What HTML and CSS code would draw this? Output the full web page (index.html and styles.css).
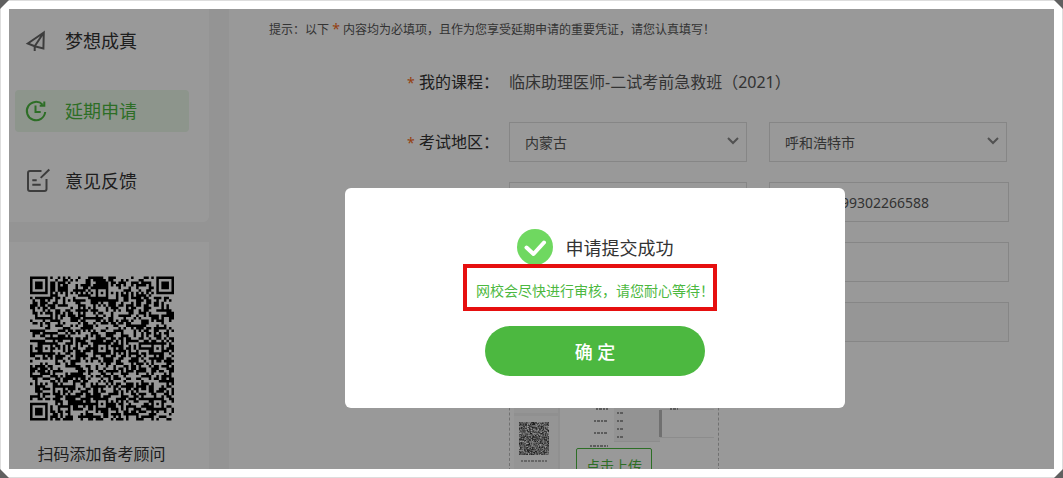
FILE: index.html
```html
<!DOCTYPE html>
<html lang="zh-CN">
<head>
<meta charset="utf-8">
<meta name="viewport" content="width=device-width, initial-scale=1">
<title>延期申请</title>
<link rel="stylesheet" href="styles.css">
</head>
<body>
<div class="frame">
  <i class="corner corner-tl"></i><i class="corner corner-tr"></i><i class="corner corner-bl"></i><i class="corner corner-br"></i>
  <div class="page">
    <aside class="sidebar">
      <nav class="card menu">
        <a class="menu-item" href="#">
          <svg class="icon" viewBox="0 0 24 24" aria-hidden="true"><path d="M18.800 3.500 2.800 14.500l6.900 2.800 8.700 2.200ZM18.800 3.500 9.700 17.300V22"/></svg>
          <span>梦想成真</span>
        </a>
        <a class="menu-item active" href="#">
          <svg class="icon" viewBox="0 0 24 24" aria-hidden="true"><path d="M17.600 5.600A9.200 9.200 0 1 0 20.200 13M19.300 2.500v4.300h-4.600M10.500 6.600v6.400h5.200"/></svg>
          <span>延期申请</span>
        </a>
        <a class="menu-item" href="#">
          <svg class="icon" viewBox="0 0 24 24" aria-hidden="true"><path d="M16.500 2H5a2 2 0 0 0-2 2v16a2 2 0 0 0 2 2h14.500a2 2 0 0 0 2-2V10M24.300.500l-8.600 8.400M7.300 11.200h4.400M7.300 15.700h8.400"/></svg>
          <span>意见反馈</span>
        </a>
      </nav>
      <section class="card contact">
        <svg class="qr" viewBox="0 0 57 57" role="img" aria-label="二维码"><path id="qr-code"/></svg>
        <p class="contact-text">扫码添加备考顾问</p>
      </section>
    </aside>

    <main class="content">
      <p class="hint">提示：以下 <b class="star">*</b> 内容均为必填项，且作为您享受延期申请的重要凭证，请您认真填写！</p>
      <form class="form">
        <div class="row">
          <span class="label"><b class="star">*</b> 我的课程：</span>
          <span class="course">临床助理医师-二试考前急救班（2021）</span>
        </div>
        <div class="row">
          <label class="label" for="province"><b class="star">*</b> 考试地区：</label>
          <div class="fields">
            <div class="select">
              <select id="province"><option>内蒙古</option></select>
              <svg class="chevron" viewBox="0 0 12 8" aria-hidden="true"><path d="m1 1 5 5 5-5"/></svg>
            </div>
            <div class="select">
              <select aria-label="城市"><option>呼和浩特市</option></select>
              <svg class="chevron" viewBox="0 0 12 8" aria-hidden="true"><path d="m1 1 5 5 5-5"/></svg>
            </div>
          </div>
        </div>
        <div class="row">
          <span class="label"></span>
          <div class="fields">
            <div class="select"><select aria-label="证件类型"></select></div>
            <input class="input id-number" type="text" aria-label="证件号码" value="99302266588">
          </div>
        </div>
        <div class="row">
          <span class="label"></span>
          <input class="input wide" type="text" aria-label="姓名">
        </div>
        <div class="row">
          <span class="label"></span>
          <input class="input wide" type="text" aria-label="申请信息" disabled>
        </div>
        <div class="row">
          <span class="label"></span>
          <div class="upload">
            <svg class="preview" viewBox="0 0 208 208" aria-hidden="true">
              <path fill="#f8f8f8" d="M4 0h44v208H4z"/>
              <path fill="#f0f0f0" d="M4 50h44v3H4zM48 0h2v208h-2z"/>
              <svg x="9" y="59" width="30" height="33" viewBox="0 0 57 57" preserveAspectRatio="none"><use href="#qr-code" opacity=".8"/></svg>
              <path stroke="#aaa" stroke-width="2" stroke-dasharray="2 1 3 1" d="M11 98h26"/>
              <path fill="#f5f5f5" d="M104 0h46v78h-46z"/>
              <path fill="#e9e9e9" d="M104 78h46v1h-46zM150 74h54v1h-54zM150 46h54v1h-54z"/>
              <path fill="#bbb" d="M149 47h3v27h-3z"/>
              <path stroke="#999" stroke-width="2" stroke-dasharray="2 1 3 1" d="M86 46h12M84 58h14M84 70h14M80 83h18M107 50h6M107 58h6M107 66h6M107 74h6M160 46h8"/>
            </svg>
            <button class="upload-button" type="button">点击上传</button>
          </div>
        </div>
      </form>
    </main>

    <div class="overlay">
      <section class="dialog" role="dialog" aria-modal="true" aria-labelledby="dialog-title">
        <div class="dialog-head">
          <svg class="success" viewBox="0 0 36 36" aria-hidden="true"><circle cx="18" cy="18" r="18"/><path d="m9.500 18.500 7 6.500L27 13.500"/></svg>
          <h1 class="dialog-title" id="dialog-title">申请提交成功</h1>
        </div>
        <p class="dialog-text">网校会尽快进行审核，请您耐心等待！</p>
        <button class="confirm" type="button">确 定</button>
      </section>
    </div>
  </div>
</div>
<script src="qr.js"></script>
</body>
</html>
```

FILE: styles.css
```css
* { box-sizing: border-box; }

body {
  margin: 0;
  background: #fff;
  color: #333;
  font-family: "Noto Sans", "Noto Sans CJK SC", sans-serif;
  font-size: 14px;
}

h1, p { margin: 0; }
button, input, select { font: inherit; color: inherit; }

.frame {
  position: relative;
  height: 100vh;
  padding: 8px;
  border: 1px solid #ddd;
}

.corner {
  position: absolute;
  width: 9px;
  height: 9px;
  background: #606060;
}
.corner-tl { top: -1px; left: -1px; clip-path: polygon(0 0, 100% 0, 0 100%); }
.corner-tr { top: -1px; right: -1px; clip-path: polygon(0 0, 100% 0, 100% 100%); }
.corner-bl { bottom: -1px; left: -1px; clip-path: polygon(0 0, 100% 100%, 0 100%); }
.corner-br { bottom: -1px; right: -1px; clip-path: polygon(100% 0, 100% 100%, 0 100%); }

.page {
  position: relative;
  display: flex;
  gap: 20px;
  height: 100%;
  overflow: hidden;
  background: #f7f7f7;
}

.sidebar {
  display: flex;
  flex: 0 0 200px;
  flex-direction: column;
  gap: 20px;
}

.card { background: #fff; }

.menu {
  display: flex;
  flex-direction: column;
  gap: 28px;
  padding: 11px 20px 20px 6px;
  border-radius: 0 0 6px 0;
}

.menu-item {
  display: flex;
  align-items: center;
  gap: 16px;
  height: 42px;
  padding-left: 10px;
  border-radius: 4px;
  color: #333;
  font-size: 18px;
  line-height: 24px;
  text-decoration: none;
}
.menu-item.active { background: #ebf8e9; color: #4cb840; }

.icon {
  width: 24px;
  height: 24px;
  overflow: visible;
  fill: none;
  stroke: #666;
  stroke-width: 2;
}
.active .icon { stroke: #4cb840; }

.contact {
  display: flex;
  flex: 1 0 auto;
  flex-direction: column;
  align-items: center;
  gap: 21px;
  padding: 34px 15px 0 0;
}

.qr { width: 144px; height: 145px; }
.contact-text { font-size: 16px; line-height: 24px; }

.content {
  flex: 1;
  padding: 11px 40px 0;
  background: #fff;
}

.hint { color: #555; font-size: 12px; line-height: 20px; }
.star { color: #f76b1c; font-size: 14px; font-weight: 400; line-height: 1; }

.form {
  display: flex;
  flex-direction: column;
  gap: 20px;
  margin-top: 22px;
}

.row { display: flex; min-height: 40px; }

.label {
  flex: 0 0 240px;
  padding-right: 10px;
  font-size: 16px;
  line-height: 40px;
  text-align: right;
}

.course { color: #555; font-size: 16px; line-height: 40px; }

.fields { display: flex; gap: 22px; }

.select { position: relative; width: 238px; height: 40px; }
.select select {
  width: 100%;
  height: 100%;
  padding: 0 15px;
  border: 1px solid #e0e0e0;
  border-radius: 0;
  appearance: none;
  background: #fff;
  color: #555;
}

.chevron {
  position: absolute;
  top: 15px;
  right: 8px;
  width: 12px;
  height: 8px;
  fill: none;
  stroke: #888;
  stroke-width: 2;
}

.input {
  width: 240px;
  height: 40px;
  padding: 0 16px;
  border: 1px solid #e0e0e0;
  border-radius: 0;
  background: #fff;
  color: #555;
}
.input.wide { width: 500px; }
.input:disabled { background: #fafafa; }
.input.id-number { padding-right: 79px; text-align: right; }

.upload {
  display: grid;
  place-items: center;
  width: 210px;
  height: 210px;
  border: 1px dashed #bbb;
}
.preview, .upload-button { grid-area: 1 / 1; }
.preview { width: 100%; height: 100%; }
.upload-button {
  height: 38px;
  padding: 0 9px 4px;
  border: 1px solid #4cb840;
  border-radius: 2px;
  background: #fff;
  color: #4cb840;
}

.overlay {
  position: absolute;
  inset: 0;
  display: flex;
  align-items: center;
  justify-content: center;
  padding: 118px 0 0 127px;
  background: rgba(0, 0, 0, .4);
}

.dialog {
  display: flex;
  flex-direction: column;
  align-items: center;
  width: 500px;
  padding: 41px 0 32px;
  border-radius: 6px;
  background: #fff;
}

.dialog-head { display: flex; align-items: center; gap: 13px; }
.success { width: 36px; height: 36px; }
.success circle { fill: #6fd860; }
.success path {
  fill: none;
  stroke: #fff;
  stroke-width: 4;
  stroke-linecap: round;
  stroke-linejoin: round;
}
.dialog-title { font-size: 18px; font-weight: 400; }

.dialog-text {
  position: relative;
  margin-top: 14px;
  color: #4cb840;
  line-height: 24px;
}
.dialog-text::after {
  position: absolute;
  inset: -15px -3px -8px -13px;
  border: 4px solid #e60f0f;
  content: "";
}

.confirm {
  width: 220px;
  height: 50px;
  margin-top: 23px;
  border: 0;
  border-radius: 25px;
  background: #4cb840;
  color: #fff;
  font-size: 18px;
  font-weight: 500;
}
```

FILE: qr.js
```js
// Fills the 57-module code: finder, alignment and timing patterns, then data modules.
(function () {
  var size = 57;
  var seed = 20;
  function random() {
    seed = (seed * 48271) % 2147483647;
    return seed / 2147483647;
  }
  function ring(dx, dy) { return Math.max(Math.abs(dx), Math.abs(dy)); }
  var finders = [[3, 3], [53, 3], [3, 53]];
  var marks = [6, 28, 50];
  function module(x, y) {
    var data = random() < 0.52;
    var i, j, r;
    for (i = 0; i < finders.length; i++) {
      r = ring(x - finders[i][0], y - finders[i][1]);
      if (r <= 4) return r !== 4 && r !== 2;
    }
    for (i = 0; i < 3; i++) {
      for (j = 0; j < 3; j++) {
        if ((i === 0 && j === 0) || (i === 2 && j === 0) || (i === 0 && j === 2)) continue;
        r = ring(x - marks[i], y - marks[j]);
        if (r <= 2) return r !== 1;
      }
    }
    if (x === 6 || y === 6) return (x + y) % 2 === 0;
    return data;
  }
  // Neighbouring dark modules of a row are joined into one bar.
  var d = "";
  for (var y = 0; y < size; y++) {
    var run = 0;
    for (var x = 0; x <= size; x++) {
      if (x < size && module(x, y)) {
        run++;
      } else if (run) {
        d += "M" + (x - run) + " " + y + "h" + run + "v1h-" + run + "z";
        run = 0;
      }
    }
  }
  document.getElementById("qr-code").setAttribute("d", d);
})();
```
